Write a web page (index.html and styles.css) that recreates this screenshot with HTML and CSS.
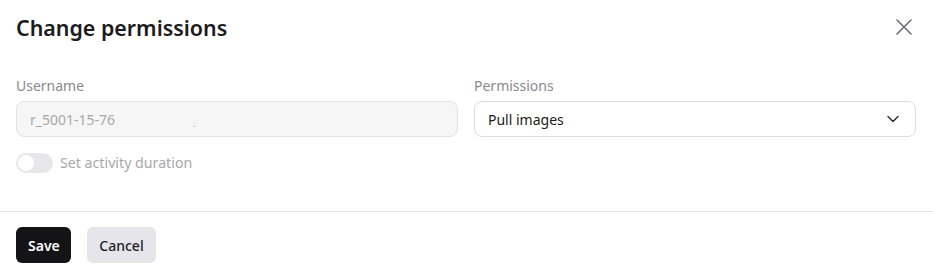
FILE: index.html
```html
<!DOCTYPE html>
<html lang="en">
<head>
<meta charset="utf-8">
<title>Change permissions</title>
<link rel="stylesheet" href="styles.css">
</head>
<body>
<div class="dialog">
  <div class="header">
    <h1 class="title">Change permissions</h1>
    <button class="close" aria-label="Close">
      <svg width="16" height="16" viewBox="0 0 16 16"><path d="M1 1L15 15M15 1L1 15" stroke="#6e6e76" stroke-width="1.6" fill="none" stroke-linecap="round"/></svg>
    </button>
  </div>
  <div class="body">
    <div class="fields">
      <div class="field">
        <label class="label">Username</label>
        <div class="input disabled"><span>r_5001-15-76</span><span class="dot">.</span></div>
      </div>
      <div class="field">
        <label class="label">Permissions</label>
        <div class="input select"><span>Pull images</span>
          <svg width="14" height="14" viewBox="0 0 14 14"><path d="M2 4.5L7 9.5L12 4.5" stroke="#2a2a2e" stroke-width="1.4" fill="none" stroke-linecap="round" stroke-linejoin="round"/></svg>
        </div>
      </div>
    </div>
    <div class="toggle-row">
      <span class="toggle"><span class="knob"></span></span>
      <span class="toggle-label">Set activity duration</span>
    </div>
  </div>
  <div class="footer">
    <button class="btn primary">Save</button>
    <button class="btn secondary">Cancel</button>
  </div>
</div>
</body>
</html>
```
FILE: styles.css
```css
* { box-sizing: border-box; }
html, body { margin: 0; padding: 0; background: #fff; }
body { font-family: "Noto Sans", "Open Sans", sans-serif; color: #1a1a1e; }
.dialog { width: 933px; }
.header { display: flex; justify-content: space-between; align-items: flex-start; padding: 13px 17px 0 16px; height: 56px; }
.title { margin: 0; font-size: 21.4px; font-weight: 600; line-height: 30px; color: #1c1c20; }
.close { border: 0; background: none; padding: 0; margin-top: 3px; margin-right: 1px; width: 22px; height: 22px; display: flex; align-items: center; justify-content: center; }
.body { padding: 20px 17px 0 16px; height: 155px; }
.fields { display: grid; grid-template-columns: 1fr 1fr; gap: 16px; }
.field { display: flex; flex-direction: column; }
.label { font-size: 14px; line-height: 20px; color: #8a8a8e; margin-bottom: 5px; }
.input { height: 36px; border: 1px solid #dcdcdf; border-radius: 8px; padding: 0 13px; display: flex; align-items: center; font-size: 14px; background: #fff; }
.input.disabled { background: #f6f6f7; color: #a8a8ac; border-color: #e2e2e4; }
.dot { margin-left: 78px; font-size: 10px; margin-top: 8px; color: #b0b0b4; }
.select { justify-content: space-between; color: #1c1c20; padding-right: 15px; }
.toggle-row { display: flex; align-items: center; gap: 7px; margin-top: 16px; }
.toggle { width: 37px; height: 20px; border-radius: 10px; background: #e7e7ea; position: relative; display: inline-block; }
.knob { position: absolute; left: 2px; top: 2px; width: 16px; height: 16px; border-radius: 50%; background: #fff; }
.toggle-label { font-size: 14.2px; line-height: 20px; color: #a8a8ac; }
.footer { border-top: 1px solid #e6e6e8; padding: 15px 16px; display: flex; gap: 16px; }
.btn { height: 36px; border: 0; border-radius: 6px; font-family: inherit; font-size: 14px; padding: 0 12px; }
.primary { background: #141416; color: #fff; font-weight: 600; width: 55px; }
.secondary { background: #e6e6ea; color: #1e1e28; font-weight: 500; width: 69px; }
```
